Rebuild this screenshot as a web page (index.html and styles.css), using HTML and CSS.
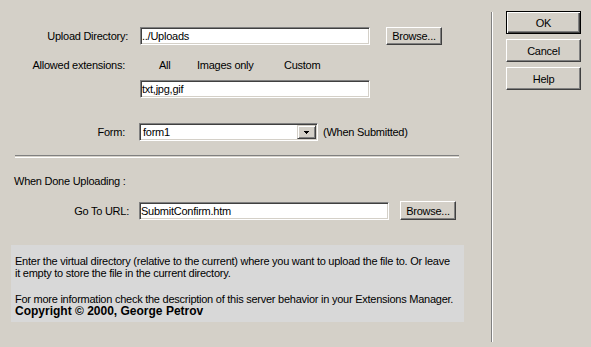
FILE: index.html
```html
<!DOCTYPE html>
<html lang="en">
<head>
    <meta charset="UTF-8">
    <title>File Upload</title>
    <link rel="stylesheet" href="styles.css">
</head>
<body>
    <div class="dialog">
        <div class="main">
            <div class="row row-upload">
                <label class="label" for="uploadDir">Upload Directory:</label>
                <input class="edit edit-dir" type="text" id="uploadDir" value="../Uploads">
                <button class="btn btn-browse">Browse...</button>
            </div>
            <div class="row row-ext">
                <span class="label label-narrow">Allowed extensions:</span>
                <div class="options">
                    <span class="opt opt-all">All</span>
                    <span class="opt opt-images">Images only</span>
                    <span class="opt">Custom</span>
                </div>
            </div>
            <div class="row row-custom">
                <input class="edit edit-dir" type="text" value="txt,jpg,gif">
            </div>
            <div class="row row-form">
                <span class="label label-narrow">Form:</span>
                <div class="combo">
                    <span class="combo-text">form1</span>
                    <span class="combo-btn">
                        <svg width="5" height="3" viewBox="0 0 5 3" shape-rendering="crispEdges">
                            <rect x="0" y="0" width="5" height="1" fill="#000"/>
                            <rect x="1" y="1" width="3" height="1" fill="#000"/>
                            <rect x="2" y="2" width="1" height="1" fill="#000"/>
                        </svg>
                    </span>
                </div>
                <span class="hint">(When Submitted)</span>
            </div>
            <div class="separator"></div>
            <div class="section-title">When Done Uploading :</div>
            <div class="row row-url">
                <label class="label label-wide" for="gotoUrl">Go To URL:</label>
                <input class="edit edit-url" type="text" id="gotoUrl" value="SubmitConfirm.htm">
                <button class="btn btn-browse btn-browse-url">Browse...</button>
            </div>
            <div class="info">
                <p class="info-text">Enter the virtual directory (relative to the current) where you want to upload the file to. Or leave<br>it empty to store the file in the current directory.</p>
                <p class="info-text info-more">For more information check the description of this server behavior in your Extensions Manager.</p>
                <p class="copyright">Copyright &copy; 2000, George Petrov</p>
            </div>
        </div>
        <div class="divider"></div>
        <div class="actions">
            <button class="btn btn-action btn-default">OK</button>
            <button class="btn btn-action">Cancel</button>
            <button class="btn btn-action">Help</button>
        </div>
    </div>
</body>
</html>
```

FILE: styles.css
```css
body {
    margin: 0;
    background: #d4d0c8;
    font-family: 'Liberation Sans', Arial, sans-serif;
    font-size: 11px;
    letter-spacing: -0.25px;
    color: #000;
}
.dialog {
    display: flex;
    height: 347px;
}
.main {
    width: 491px;
    padding-top: 27px;
    box-sizing: border-box;
}
.row {
    display: flex;
    align-items: center;
}
.label {
    flex: none;
    width: 128px;
    text-align: right;
}
.label-narrow {
    width: 125px;
}
.label-wide {
    width: 129px;
}
.edit {
    box-sizing: border-box;
    height: 18px;
    margin: 0;
    padding: 0 1px;
    font: inherit;
    letter-spacing: inherit;
    color: #000;
    background: #fff;
    border: 1px solid;
    border-color: #808080 #fff #fff #808080;
    box-shadow: inset 1px 1px #404040, inset -1px -1px #d4d0c8;
    outline: none;
}
.edit-dir {
    width: 230px;
    margin-left: 12px;
}
.btn {
    box-sizing: border-box;
    margin: 0;
    padding: 0;
    font: inherit;
    letter-spacing: inherit;
    color: #000;
    background: #d4d0c8;
    border: 1px solid;
    border-color: #fff #404040 #404040 #fff;
    box-shadow: inset -1px -1px #808080;
}
.btn-browse {
    width: 56px;
    height: 18px;
    margin-left: 16px;
}
.row-upload {
    height: 18px;
}
.row-ext {
    height: 14px;
    margin-top: 13px;
}
.options {
    display: flex;
    margin-left: 34px;
}
.opt-all {
    width: 38px;
}
.opt-images {
    width: 87px;
}
.row-custom {
    margin-top: 8px;
    padding-left: 128px;
}
.row-form {
    margin-top: 25px;
}
.combo {
    display: flex;
    align-items: center;
    box-sizing: border-box;
    width: 179px;
    height: 18px;
    margin-left: 14px;
    padding: 1px;
    background: #fff;
    border: 1px solid;
    border-color: #808080 #fff #fff #808080;
    box-shadow: inset 1px 1px #404040, inset -1px -1px #d4d0c8;
}
.combo-text {
    flex: 1;
    padding-left: 2px;
}
.combo-btn {
    display: flex;
    align-items: center;
    justify-content: center;
    box-sizing: border-box;
    width: 19px;
    height: 14px;
    background: #d4d0c8;
    border: 1px solid;
    border-color: #d4d0c8 #404040 #404040 #d4d0c8;
    box-shadow: inset 1px 1px #fff, inset -1px -1px #808080;
}
.hint {
    margin-left: 5px;
}
.separator {
    width: 444px;
    height: 1px;
    margin: 14px 0 0 15px;
    border-top: 1px solid #808080;
    border-bottom: 1px solid #fff;
}
.section-title {
    margin-top: 16px;
    padding-left: 14px;
    line-height: 14px;
}
.row-url {
    height: 19px;
    margin-top: 13px;
}
.edit-url {
    width: 250px;
    margin-left: 10px;
}
.btn-browse-url {
    height: 19px;
    margin-left: 11px;
}
.info {
    box-sizing: border-box;
    width: 453px;
    height: 77px;
    margin: 25px 0 0 11px;
    padding: 10px 4px 0;
    background: #d8d8d8;
}
.info p {
    margin: 0;
    white-space: nowrap;
}
.info-text {
    line-height: 12px;
}
.info-more {
    margin-top: 14px !important;
}
.copyright {
    font-size: 12px;
    font-weight: bold;
    letter-spacing: 0;
    line-height: 12px;
}
.divider {
    margin: 12px 0 5px;
    border-left: 1px solid #808080;
    border-right: 1px solid #fff;
}
.actions {
    display: flex;
    flex-direction: column;
    gap: 5px;
    padding: 11px 0 0 13px;
}
.btn-action {
    width: 75px;
    height: 23px;
}
.btn-default {
    border: 1px solid #000;
    box-shadow: inset 1px 1px #fff, inset -1px -1px #404040, inset -2px -2px #808080;
}
```
